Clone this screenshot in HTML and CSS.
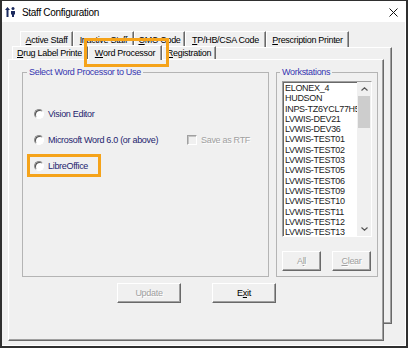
FILE: index.html
```html
<!DOCTYPE html>
<html lang="en">
    <head>
        <title>Staff Configuration</title>
        <meta charset="utf-8">
        <link rel="stylesheet" href="styles.css">
    </head>
    <body>
      <div class="window">
        <div class="titlebar">
          <svg class="app-icon" width="11" height="10" viewBox="0 0 11 10">
            <polygon points="2.5,0 5,3 3.5,3 3.5,10 1.5,10 1.5,3 0,3" fill="#1b2a5e"/>
            <circle cx="8" cy="1.6" r="1.5" fill="#1b2a5e"/>
            <path d="M6 4h4v3.5h-1v2.5h-2v-2.5h-1z" fill="#1b2a5e"/>
          </svg>
          <span class="title">Staff Configuration</span>
          <svg class="close" width="9" height="9" viewBox="0 0 9 9">
            <path d="M0.5 0.5L8.5 8.5M8.5 0.5L0.5 8.5" stroke="#111" stroke-width="1"/>
          </svg>
        </div>

        <div class="client">
          <div class="tabstack">

            <!-- back row of tabs -->
            <div class="layer back">
              <div class="tabrow">
                <span class="tab w-active"><u>A</u>ctive Staff</span>
                <span class="tab w-inactive"><u>I</u>nactive Staff</span>
                <span class="tab w-cmc"><u>C</u>MC Code</span>
                <span class="tab w-tp"><u>T</u>P/HB/CSA Code</span>
                <span class="tab w-rx"><u>P</u>rescription Printer</span>
              </div>
              <div class="tabbody"></div>
            </div>

            <!-- front row + page -->
            <div class="layer front">
              <div class="tabrow">
                <span class="tab w-drug"><span class="clip"><u>D</u>rug Label Printer</span></span>
                <span class="tab tab-sel w-word"><u>W</u>ord Processor</span>
                <span class="tab w-reg"><u>R</u>egistration</span>
              </div>

              <div class="page">
                <div class="groups">
                  <fieldset class="grp grp-wp">
                    <legend>Select Word Processor to Use</legend>
                    <div class="opts">
                      <div class="opt">
                        <span class="radio"></span>
                        <span class="opt-label">Vision Editor</span>
                      </div>
                      <div class="opt">
                        <span class="opt-wide">
                          <span class="radio"></span>
                          <span class="opt-label">Microsoft Word 6.0 (or above)</span>
                        </span>
                        <span class="check"></span>
                        <span class="off">Save as RTF</span>
                      </div>
                      <div class="opt hl">
                        <span class="radio"></span>
                        <span class="opt-label">LibreOffice</span>
                      </div>
                    </div>
                  </fieldset>

                  <fieldset class="grp grp-ws">
                    <legend>Workstations</legend>
                    <div class="listbox">
                      <div class="items">
                        <div>ELONEX_4</div>
                        <div>HUDSON</div>
                        <div>INPS-TZ6YCL77H5</div>
                        <div>LVWIS-DEV21</div>
                        <div>LVWIS-DEV36</div>
                        <div>LVWIS-TEST01</div>
                        <div>LVWIS-TEST02</div>
                        <div>LVWIS-TEST03</div>
                        <div>LVWIS-TEST05</div>
                        <div>LVWIS-TEST06</div>
                        <div>LVWIS-TEST09</div>
                        <div>LVWIS-TEST10</div>
                        <div>LVWIS-TEST11</div>
                        <div>LVWIS-TEST12</div>
                        <div>LVWIS-TEST13</div>
                      </div>
                      <div class="scrollbar">
                        <div class="sb-btn">
                          <svg width="7" height="4" viewBox="0 0 7 4"><polyline points="0.5,3.5 3.5,0.8 6.5,3.5" fill="none" stroke="#555" stroke-width="1.2"/></svg>
                        </div>
                        <div class="sb-thumb"></div>
                        <div class="sb-track"></div>
                        <div class="sb-btn">
                          <svg width="7" height="4" viewBox="0 0 7 4"><polyline points="0.5,0.5 3.5,3.2 6.5,0.5" fill="none" stroke="#555" stroke-width="1.2"/></svg>
                        </div>
                      </div>
                    </div>
                    <div class="ws-btns">
                      <button class="btn btn-sm off">A<u>l</u>l</button>
                      <button class="btn btn-sm off"><u>C</u>lear</button>
                    </div>
                  </fieldset>
                </div>

                <div class="actions">
                  <button class="btn off">Update</button>
                  <button class="btn">E<u>x</u>it</button>
                </div>
              </div>
            </div>

          </div>
        </div>
      </div>
    </body>
</html>
```

FILE: styles.css
```css
* {
  box-sizing: border-box;
}

body {
  margin: 0;
  font-family: "Liberation Sans", Arial, sans-serif;
  font-size: 9px;
  letter-spacing: -0.3px;
  color: #000;
  background: #f0f0f0;
}

.window {
  width: 408px;
  height: 348px;
  border: 2px solid #2f2f2f;
  border-top-width: 1px;
  display: flex;
  flex-direction: column;
}

/* title bar */
.titlebar {
  height: 21px;
  flex: none;
  background: #fff;
  display: flex;
  align-items: center;
  padding: 1px 8px 0 3px;
}
.title {
  margin-left: 6px;
  font-size: 10px;
  letter-spacing: -0.3px;
}
.close {
  margin-left: auto;
}

.client {
  flex: 1;
  padding: 9px 0 0 6px;
  box-shadow: inset -1px -1px #fff;
}

/* stacked tab control */
.tabstack {
  display: grid;
  grid-template: 1fr / 1fr;
  width: 384px;
  height: 310px;
}
.layer {
  grid-area: 1 / 1;
  display: flex;
  flex-direction: column;
}
.back {
  margin: 0 0 17px 12px;
}
.front {
  margin: 14px 8px 0 0;
}

.tabrow {
  display: flex;
  align-items: flex-end;
  flex: none;
  height: 16px;
}
.front .tabrow {
  height: 14px;
}

.tab {
  height: 16px;
  display: flex;
  align-items: center;
  justify-content: center;
  white-space: nowrap;
  background: #f0f0f0;
  border-top: 1px solid #fff;
  border-left: 1px solid #fff;
  border-right: 1px solid #696969;
  box-shadow: inset -1px 0 #a0a0a0;
}
.front .tab {
  height: 13px;
}
.front .tab-sel {
  height: 15px;
  margin-bottom: -1px;
  position: relative;
  z-index: 2;
}
.tab-sel::after {
  content: "";
  position: absolute;
  top: -8px;
  right: -8px;
  bottom: -7px;
  left: -5px;
  border: 3px solid #f5a31a;
}

.w-active { width: 53px; }
.w-inactive { width: 61px; }
.w-cmc { width: 51px; }
.w-tp { width: 81px; }
.w-rx { width: 83px; }
.w-drug {
  width: 76px;
  margin-left: 4px;
  justify-content: flex-start;
  padding-left: 4px;
}
.w-word { width: 74px; }
.w-reg { width: 54px; }

.clip {
  width: 65px;
  overflow: hidden;
}

.tabbody,
.page {
  flex: 1;
  background: #f0f0f0;
  border: 1px solid;
  border-color: #fff #696969 #696969 #fff;
  box-shadow: inset -1px -1px #a0a0a0;
}

.page {
  padding: 6px 4px 0 13px;
  display: flex;
  flex-direction: column;
}

/* group boxes */
.groups {
  display: flex;
  gap: 7px;
}
.grp {
  margin: 0;
  padding: 0;
  min-width: 0;
  height: 211px;
  border: 1px solid #b4b4b4;
}
.grp legend {
  padding: 0 2px;
  margin-left: 4px;
  line-height: 12px;
  color: #3535b0;
}
.grp-wp {
  width: 247px;
}
.grp-ws {
  width: 102px;
  padding: 0 5px;
}
.grp-ws legend {
  margin-left: -2px;
}

.opts {
  padding: 24px 0 0 11px;
  display: flex;
  flex-direction: column;
  gap: 3px;
}
.opt {
  height: 23px;
  display: flex;
  align-items: center;
}
.opt-wide {
  width: 153px;
  display: flex;
  align-items: center;
}
.opt-label {
  margin-left: 4px;
  color: #24246e;
}
.opt.hl {
  width: 74px;
  margin-left: -7px;
  padding-left: 4px;
  border: 3px solid #f5a31a;
}

.radio {
  width: 10px;
  height: 10px;
  flex: none;
  border-radius: 50%;
  border: 1px solid;
  border-color: #8a8a8a #fff #fff #8a8a8a;
  background: #fff;
  box-shadow: inset 1px 1px #505050;
}
.check {
  width: 10px;
  height: 10px;
  flex: none;
  margin-right: 4px;
  border: 1px solid;
  border-color: #a0a0a0 #fff #fff #a0a0a0;
  box-shadow: inset 1px 1px #c4c4c4;
  background: #f0f0f0;
}
.off {
  color: #a0a0a0;
  text-shadow: 1px 1px #fff;
}

/* workstation list */
.listbox {
  margin-top: 3px;
  width: 90px;
  height: 156px;
  display: flex;
  background: #fff;
  border: 1px solid;
  border-color: #a0a0a0 #fff #fff #a0a0a0;
  box-shadow: inset 1px 1px #696969;
}
.items {
  flex: 1;
  min-width: 0;
  overflow: hidden;
  padding: 1px 0 0 2px;
  line-height: 10.3px;
  letter-spacing: -0.3px;
  color: #222;
  white-space: nowrap;
}
.scrollbar {
  width: 14px;
  flex: none;
  display: flex;
  flex-direction: column;
  background: #f0f0f0;
}
.sb-btn {
  height: 14px;
  display: flex;
  align-items: center;
  justify-content: center;
}
.sb-thumb {
  height: 32px;
  margin: 0 1px;
  background: #cdcdcd;
}
.sb-track {
  flex: 1;
}

.ws-btns {
  margin-top: 14px;
  display: flex;
  gap: 11px;
}

/* buttons */
.btn {
  width: 64px;
  height: 20px;
  padding: 0;
  font: inherit;
  letter-spacing: inherit;
  color: #000;
  background: #f0f0f0;
  border: 1px solid;
  border-color: #fff #696969 #696969 #fff;
  box-shadow: inset -1px -1px #a0a0a0;
  display: flex;
  align-items: center;
  justify-content: center;
}
.btn.off {
  color: #a0a0a0;
}
.btn-sm {
  width: 39px;
}

.actions {
  display: flex;
  gap: 31px;
  margin: 6px 0 0 95px;
}
```
